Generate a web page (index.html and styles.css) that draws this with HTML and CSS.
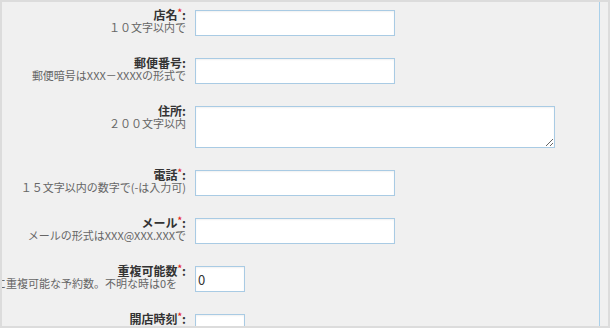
FILE: index.html
```html
<!DOCTYPE html>
<html lang="ja">

<head>
    <meta charset="UTF-8">
    <meta name="viewport" content="width=device-width, initial-scale=1.0">
    <title>店舗登録</title>
    <link rel="stylesheet" href="styles.css">
</head>

<body>
    <div class="frame">
        <form class="shopForm">
            <div class="row">
                <div class="caption">
                    <label for="shopName">店名<span class="req">*</span>:</label>
                    <span class="hint">１０文字以内で</span>
                </div>
                <input type="text" id="shopName" class="field">
            </div>
            <div class="row">
                <div class="caption">
                    <label for="zip">郵便番号:</label>
                    <span class="hint">郵便暗号はXXX－XXXXの形式で</span>
                </div>
                <input type="text" id="zip" class="field">
            </div>
            <div class="row">
                <div class="caption">
                    <label for="address">住所:</label>
                    <span class="hint">２００文字以内</span>
                </div>
                <textarea id="address" class="field fieldArea"></textarea>
            </div>
            <div class="row">
                <div class="caption">
                    <label for="tel">電話<span class="req">*</span>:</label>
                    <span class="hint">１５文字以内の数字で(-は入力可)</span>
                </div>
                <input type="text" id="tel" class="field">
            </div>
            <div class="row">
                <div class="caption">
                    <label for="mail">メール<span class="req">*</span>:</label>
                    <span class="hint">メールの形式はXXX@XXX.XXXで</span>
                </div>
                <input type="text" id="mail" class="field">
            </div>
            <div class="row">
                <div class="caption">
                    <label for="capacity">重複可能数<span class="req">*</span>:</label>
                    <span class="hint hintWide">同じ時間帯に重複可能な予約数。不明な時は0を</span>
                </div>
                <input type="text" id="capacity" class="field fieldShort" value="0">
            </div>
            <div class="row">
                <div class="caption">
                    <label for="openTime">開店時刻<span class="req">*</span>:</label>
                    <span class="hint">開店時刻をHH:MMの形式で入力</span>
                </div>
                <input type="text" id="openTime" class="field fieldShort">
            </div>
        </form>
    </div>
</body>

</html>
```

FILE: styles.css
```css
body {
    margin: 0;
    font-family: "Noto Sans CJK JP", "DejaVu Sans", sans-serif;
    color: #333;
}

.frame {
    width: 610px;
    height: 328px;
    box-sizing: border-box;
    border: 2px solid #dcdcdc;
    background-color: #f0f0f0;
    overflow: hidden;
}

.shopForm {
    width: 598px;
    height: 100%;
    box-sizing: border-box;
    padding-top: 8px;
    border-right: 1px solid #a9d0ea;
}

.row {
    display: grid;
    grid-template-columns: 184px auto;
    column-gap: 9px;
    align-items: start;
    margin-bottom: 22px;
}

.caption {
    display: flex;
    flex-direction: column;
    align-items: flex-end;
    margin-top: -2px;
    white-space: nowrap;
}

.caption label {
    font-size: 12px;
    line-height: 13px;
    font-weight: bold;
    color: #333;
}

.req {
    color: #e52222;
    font-size: 9px;
    vertical-align: top;
    line-height: 9px;
}

.hint {
    font-size: 11px;
    line-height: 12px;
    color: #666;
}

.hintWide {
    padding-right: 9px;
}

.field {
    display: block;
    width: 200px;
    height: 26px;
    box-sizing: border-box;
    margin: 0;
    padding: 0 2px;
    border: 1px solid #a9cbe4;
    background-color: #fff;
    box-shadow: inset 0 1px 2px rgba(0, 0, 0, 0.06);
    font-family: "Noto Sans CJK JP", "DejaVu Sans", sans-serif;
    font-size: 13px;
    color: #333;
}

.fieldArea {
    width: 360px;
    height: 42px;
}

.fieldShort {
    width: 50px;
}
```
